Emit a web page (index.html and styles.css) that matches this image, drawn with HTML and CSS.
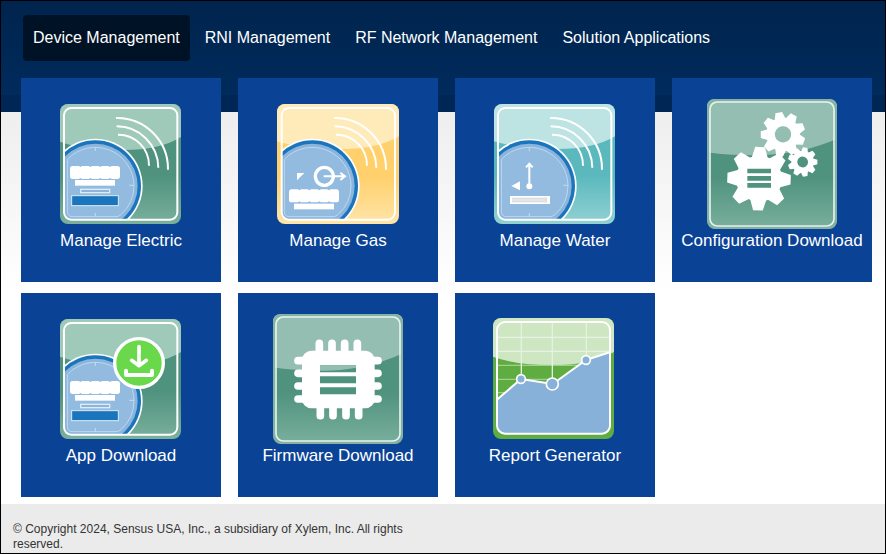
FILE: index.html
```html
<!DOCTYPE html>
<html lang="en">
<head>
<meta charset="utf-8">
<title>Device Management</title>
<link rel="stylesheet" href="styles.css">
</head>
<body>
<svg class="defs" aria-hidden="true">
  <defs>
    <linearGradient id="green" x1="0" y1="0" x2="0" y2="1"><stop offset="0.6" stop-color="#4f927d"/><stop offset="1" stop-color="#7ab09e"/></linearGradient>
    <linearGradient id="gold" x1="0" y1="0" x2="0" y2="1"><stop offset="0.6" stop-color="#ffd06c"/><stop offset="1" stop-color="#ffe5a8"/></linearGradient>
    <linearGradient id="teal" x1="0" y1="0" x2="0" y2="1"><stop offset="0.6" stop-color="#5bb9be"/><stop offset="1" stop-color="#92d1d3"/></linearGradient>
    <clipPath id="card"><rect x="30" y="30" width="363" height="360" rx="24"/></clipPath>
    <clipPath id="gold-card"><rect x="27" y="30" width="366" height="360" rx="24"/></clipPath>
    <clipPath id="inside"><rect x="42" y="42" width="340" height="334" rx="20"/></clipPath>
    <clipPath id="inside-wide"><rect x="36" y="38" width="339" height="336" rx="24"/></clipPath>
    <clipPath id="report-card"><rect x="24" y="27" width="363" height="363" rx="24"/></clipPath>

    <g id="dial">
      <g clip-path="url(#inside)">
        <circle cx="136" cy="276" r="142" fill="#fff"/>
        <circle cx="136" cy="276" r="137" fill="#1b75bc"/>
        <circle cx="136" cy="276" r="127" fill="#8bb5dc"/>
        <path d="M52 196A116 116 0 0 1 252 276A116 116 0 0 1 213 362Q207 368 198 368H67Q52 368 52 352Z" fill="#92bbdf" stroke="#bdd9ef" stroke-width="3"/>
      </g>
    </g>
    <g id="ticks" stroke="#c4dcf0" stroke-width="3"><path d="M136 160V171M136 357V368M238 274H252"/></g>
    <g id="waves" fill="none" stroke="#fff" stroke-width="6">
      <path d="M198 72A153 153 0 0 1 354 227M200 97A125 125 0 0 1 325 221M204 122A92 92 0 0 1 297 215"/>
    </g>
    <rect id="frame" x="42" y="42" width="340" height="335" rx="22" fill="none" stroke="#fff" stroke-width="6"/>
    <path id="digits" fill="#fff" d="M68 216H87L91 219L96 216H116L121 219L126 216H146L151 219L156 216H175L180 219L185 216H202Q210 216 210 224V247Q210 255 202 255H185L180 252L175 255H156L151 252L146 255H126L121 252L116 255H96L91 252L87 255H68Q60 255 60 247V224Q60 216 68 216Z"/>
    <g id="electric">
      <g clip-path="url(#card)">
        <rect x="30" y="30" width="363" height="360" fill="url(#green)"/>
        <path d="M30 30H393V129Q330 168 220 168Q100 168 30 143Z" fill="#9fcaba"/>
      </g>
      <use href="#dial"/><use href="#ticks"/>
      <use href="#digits"/>
      <rect x="75" y="258" width="120" height="17" fill="#fff"/>
      <rect x="92" y="286" width="87" height="10" fill="#8bb5dc" stroke="#dfebf5" stroke-width="4"/>
      <rect x="65" y="305" width="140" height="30" fill="#1b75bc" stroke="#dcecf8" stroke-width="3"/>
      <use href="#frame"/>
    </g>
    <path id="tooth" d="M-15-98H15L25-64H-25Z"/>
    <g id="gear-large" fill="#fff">
      <use href="#tooth"/><use href="#tooth" transform="rotate(45)"/><use href="#tooth" transform="rotate(90)"/><use href="#tooth" transform="rotate(135)"/>
      <use href="#tooth" transform="rotate(180)"/><use href="#tooth" transform="rotate(225)"/><use href="#tooth" transform="rotate(270)"/><use href="#tooth" transform="rotate(315)"/>
      <circle r="71"/>
    </g>
    <g id="gear-small" fill="#fff">
      <use href="#tooth"/><use href="#tooth" transform="rotate(40)"/><use href="#tooth" transform="rotate(80)"/><use href="#tooth" transform="rotate(120)"/>
      <use href="#tooth" transform="rotate(160)"/><use href="#tooth" transform="rotate(200)"/><use href="#tooth" transform="rotate(240)"/><use href="#tooth" transform="rotate(280)"/><use href="#tooth" transform="rotate(320)"/>
      <circle r="55" fill="none" stroke="#fff" stroke-width="38"/>
    </g>
  </defs>
</svg>

<div class="page">
  <nav class="tabs" aria-label="Main">
    <a class="tab tab-active" href="#" aria-current="page">Device Management</a>
    <a class="tab" href="#">RNI Management</a>
    <a class="tab" href="#">RF Network Management</a>
    <a class="tab" href="#">Solution Applications</a>
  </nav>

  <main class="tiles">
    <a class="tile" href="#">
      <svg class="icon" viewBox="3 0 420 411" aria-hidden="true"><use href="#electric"/><use href="#waves"/></svg>
      <span class="label">Manage Electric</span>
    </a>
    <a class="tile" href="#">
      <svg class="icon" viewBox="0 0 420 411" aria-hidden="true">
        <g clip-path="url(#gold-card)">
          <rect x="27" y="30" width="366" height="360" fill="url(#gold)"/>
          <path d="M27 30H393V127Q330 165 220 165Q100 165 27 142Z" fill="#ffebb9"/>
        </g>
        <use href="#dial" x="-3"/><use href="#waves"/>
        <path d="M87 237H109L87 259Z" fill="#fff"/>
        <circle cx="169" cy="247" r="27" fill="none" stroke="#fff" stroke-width="10"/>
        <path d="M167 247H231M217 236L231 247L217 258" fill="none" stroke="#fff" stroke-width="6"/>
        <use href="#digits" x="3" y="70"/>
        <rect x="78" y="329" width="120" height="17" fill="#fff"/>
        <use href="#frame" x="-1"/>
      </svg>
      <span class="label">Manage Gas</span>
    </a>
    <a class="tile" href="#">
      <svg class="icon" viewBox="3 0 420 411" aria-hidden="true">
        <g clip-path="url(#card)">
          <rect x="30" y="30" width="363" height="360" fill="url(#teal)"/>
          <path d="M30 30H393V127Q330 165 220 165Q100 165 30 142Z" fill="#bde4e3"/>
        </g>
        <use href="#dial"/><use href="#ticks"/><use href="#waves"/>
        <path d="M136 276V211M126 220L136 209L146 220" fill="none" stroke="#fff" stroke-width="6"/>
        <circle cx="136" cy="277" r="9" fill="#fff"/>
        <path d="M82 276L108 262V289Z" fill="#fff"/>
        <rect x="78" y="306" width="120" height="24" fill="#fff"/>
        <rect x="86" y="312" width="102" height="12" fill="#e3e6e8" stroke="#cfd4d8" stroke-width="2"/>
        <use href="#frame"/>
      </svg>
      <span class="label">Manage Water</span>
    </a>
    <a class="tile" href="#">
      <svg class="icon" viewBox="6 12 420 411" aria-hidden="true">
        <rect x="21" y="27" width="390" height="390" rx="24" fill="url(#green)"/>
        <path d="M21 187V51Q21 27 45 27H387Q411 27 411 51V146Q300 196 150 196Q80 196 21 187Z" fill="#95beb2"/>
        <rect x="24" y="30" width="384" height="384" rx="24" fill="none" stroke="#84b2a2" stroke-width="6"/>
        <rect x="30" y="36" width="372" height="372" rx="22" fill="none" stroke="#e6f2ee" stroke-width="5"/>
        <use href="#gear-large" transform="translate(177 266) rotate(2) scale(.97)"/>
        <use href="#gear-small" transform="translate(249 133) rotate(-11) scale(.68)"/>
        <use href="#gear-small" transform="translate(308 216) rotate(10) scale(.45)"/>
        <path d="M142 243H213M142 265H213M142 286H213" stroke="#4f927d" stroke-width="14"/>
      </svg>
      <span class="label">Configuration Download</span>
    </a>
    <a class="tile" href="#">
      <svg class="icon" viewBox="3 0 420 411" aria-hidden="true">
        <use href="#electric"/>
        <circle cx="267" cy="162" r="73" fill="#69d84a" stroke="#fff" stroke-width="10"/>
        <path d="M267 113V168M245 154L267 170L289 154" fill="none" stroke="#fff" stroke-width="11" stroke-linecap="round" stroke-linejoin="round"/>
        <path d="M228 185V198H306V185" fill="none" stroke="#fff" stroke-width="12" stroke-linecap="round" stroke-linejoin="round"/>
      </svg>
      <span class="label">App Download</span>
    </a>
    <a class="tile" href="#">
      <svg class="icon" viewBox="6 0 420 411" aria-hidden="true">
        <rect x="21" y="15" width="390" height="390" rx="24" fill="url(#green)"/>
        <path d="M21 175V39Q21 15 45 15H387Q411 15 411 39V133Q300 185 160 185Q80 185 21 175Z" fill="#95beb2"/>
        <rect x="24" y="18" width="384" height="384" rx="24" fill="none" stroke="#84b2a2" stroke-width="6"/>
        <rect x="30" y="24" width="372" height="372" rx="22" fill="none" stroke="#e6f2ee" stroke-width="5"/>
        <rect x="108" y="125" width="218" height="173" rx="28" fill="#fff"/>
        <path d="M160 103V160M198 103V160M236 103V160M274 103V160M163 270V320M201 270V320M240 270V320M278 270V320M96 155H150M96 193H150M96 231H150M96 270H150M280 155H336M280 193H336M280 231H336M280 270H336" stroke="#fff" stroke-width="23" stroke-linecap="round"/>
        <path d="M162 179H270M162 212H270M162 245H270" stroke="#4f927d" stroke-width="21"/>
        <path d="M162 169H270V176Q220 186 162 185Z" fill="#95beb2"/>
      </svg>
      <span class="label">Firmware Download</span>
    </a>
    <a class="tile" href="#">
      <svg class="icon" viewBox="0 0 420 411" aria-hidden="true">
        <g clip-path="url(#report-card)">
          <rect x="24" y="27" width="363" height="363" fill="#5fac41"/>
          <path d="M24 27H387V129Q310 169 205 169Q95 169 24 143Z" fill="#cfe6c3"/>
        </g>
        <g clip-path="url(#inside-wide)">
          <path d="M36 85H375M36 127H375" stroke="#e7f3e2" stroke-width="4"/>
          <path d="M36 169H300M36 211H200M36 251H80" stroke="#a0cf8e" stroke-width="4"/>
          <path d="M109 38V210M202 38V220M304 38V150" stroke="#e4f2df" stroke-width="4"/>
          <path d="M36 272L108 210L203 225L303 153L376 129V376H36Z" fill="#87b1d8"/>
          <path d="M36 272L108 210L203 225L303 153L376 129" fill="none" stroke="#fff" stroke-width="6"/>
        </g>
        <rect x="36" y="39" width="339" height="335" rx="24" fill="none" stroke="#fff" stroke-width="6"/>
        <g fill="#87b1d8" stroke="#fff" stroke-width="5"><circle cx="108" cy="210" r="13"/><circle cx="202" cy="225" r="18"/><circle cx="303" cy="153" r="13"/></g>
      </svg>
      <span class="label">Report Generator</span>
    </a>
  </main>

  <footer class="footer">
    <p class="copyright">© Copyright 2024, Sensus USA, Inc., a subsidiary of Xylem, Inc. All rights reserved.</p>
  </footer>
</div>
</body>
</html>
```
FILE: styles.css
```css
* {
  box-sizing: border-box;
}

body {
  margin: 0;
  font-family: "Liberation Sans", Arial, sans-serif;
}

.defs {
  position: absolute;
  width: 0;
  height: 0;
}

/* Navy banner runs behind the tabs and the top of the tiles. */
.page {
  display: flex;
  flex-direction: column;
  min-height: 100vh;
  border: 1px solid #000;
  background: linear-gradient(#00244d, #002b5c 94px, #002655 94px, #002655 111px, #eeeeee 111px, #ffffff 290px);
}

.tabs {
  display: flex;
  flex-wrap: wrap;
  gap: 5px;
  padding: 14px 22px 17px;
}

.tab {
  padding: 12px 10px;
  border-radius: 4px;
  color: #fff;
  font-size: 16px;
  line-height: 22px;
  text-decoration: none;
}

.tab-active {
  background: #001225;
}

.tiles {
  display: grid;
  grid-template-columns: repeat(auto-fill, 200px);
  gap: 11px 17px;
  padding: 0 10px 7px 20px;
}

.tile {
  display: flex;
  flex-direction: column;
  align-items: center;
  padding: 16px 0 31px;
  background: #0a4296;
  color: #fff;
  text-decoration: none;
}

.icon {
  width: 140px;
  height: 137px;
}

.label {
  font-size: 17px;
  line-height: 20px;
}

.footer {
  flex: 1;
  padding: 18px 12px 0;
  background: #ebebeb;
}

.copyright {
  max-width: 410px;
  margin: 0;
  color: #333;
  font-size: 12px;
  line-height: 15px;
}
```
